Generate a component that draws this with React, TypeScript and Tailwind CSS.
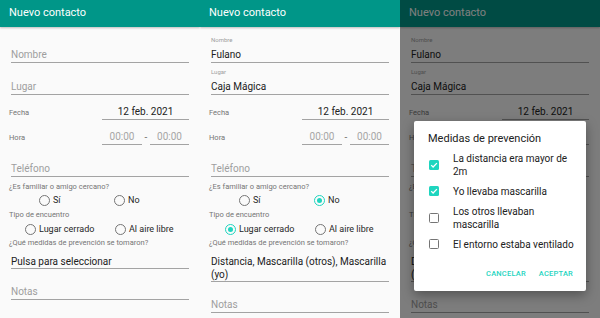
import React from "react";

function Field({ label, value, className = "" }: { label: string; value?: string; className?: string }) {
  return (
    <div className={`mx-[2px] border-b border-[#a3a3a3] ${className}`}>
      <div className="h-[10px] text-[6px] leading-[10px] text-[#9e9e9e]">{value ? label : ""}</div>
      <div className={`mt-[3px] text-[10px] leading-[14px] ${value ? "text-[#212121]" : "text-[#9e9e9e]"}`}>
        {value || label}
      </div>
    </div>
  );
}

function Radio({ label, checked }: { label: string; checked?: boolean }) {
  return (
    <div className="flex items-center gap-[3px]">
      <span
        className={`flex h-[11px] w-[11px] shrink-0 items-center justify-center rounded-full border-[1.5px] ${
          checked ? "border-[#1fd5bf]" : "border-[#757575]"
        }`}
      >
        {checked && <span className="h-[5px] w-[5px] rounded-full bg-[#1fd5bf]" />}
      </span>
      <span className="whitespace-nowrap text-[9px] leading-[12px] text-[#262626]">{label}</span>
    </div>
  );
}

function Label({ children, className = "" }: { children: React.ReactNode; className?: string }) {
  return <div className={`text-[7.5px] leading-[10px] text-[#757575] ${className}`}>{children}</div>;
}

function Checkbox({ checked }: { checked?: boolean }) {
  if (checked) {
    return (
      <span className="flex h-[10px] w-[10px] shrink-0 items-center justify-center rounded-[1.5px] bg-[#1fd5bf]">
        <svg width="10" height="10" viewBox="0 0 10 10">
          <polyline points="2.2,5.1 4.1,7 7.9,3.1" fill="none" stroke="white" strokeWidth="1.3" />
        </svg>
      </span>
    );
  }
  return <span className="h-[10px] w-[10px] shrink-0 rounded-[1.5px] border-[1.5px] border-[#757575]" />;
}

const options = [
  { text: ["La distancia era mayor de", "2m"], checked: true },
  { text: ["Yo llevaba mascarilla"], checked: true },
  { text: ["Los otros llevaban", "mascarilla"], checked: false },
  { text: ["El entorno estaba ventilado"], checked: false },
];

function Screen({ filled, dialog }: { filled?: boolean; dialog?: boolean }) {
  return (
    <div className="relative h-[318px] w-[200px] overflow-hidden bg-[#fafafa]">
      {/* Toolbar */}
      <div className="relative z-10 flex h-[27px] items-center bg-[#009688] pl-[9px] shadow-[0_1px_2px_rgba(0,0,0,0.25)]">
        <span className="text-[11px] text-white">Nuevo contacto</span>
      </div>

      <div className="px-[9px]">
        <Field label="Nombre" value={filled ? "Fulano" : undefined} className="mt-[8px]" />
        <Field label="Lugar" value={filled ? "Caja Mágica" : undefined} className="mt-[4px]" />

        {/* Fecha */}
        <div className="mt-[10px] flex items-center">
          <Label className="flex-1">Fecha</Label>
          <div className="mr-[2px] w-[87px] border-b border-[#a3a3a3] text-center text-[10px] leading-[14px] text-[#212121]">
            12 feb. 2021
          </div>
        </div>

        {/* Hora */}
        <div className="mt-[10px] flex items-center">
          <Label className="flex-1">Hora</Label>
          <div className="w-[40px] border-b border-[#a3a3a3] text-center text-[10px] leading-[14px] text-[#a6a6a6]">00:00</div>
          <div className="w-[8px] text-center text-[10px] leading-[14px] text-[#757575]">-</div>
          <div className="mr-[2px] w-[39px] border-b border-[#a3a3a3] text-center text-[10px] leading-[14px] text-[#a6a6a6]">
            00:00
          </div>
        </div>

        <Field label="Teléfono" className="mt-[4px]" />

        <Label className="mt-[5px]">¿Es familiar o amigo cercano?</Label>
        <div className="mt-[2px] flex">
          <div className="w-[91px] pl-[30px]">
            <Radio label="Sí" />
          </div>
          <div className="pl-[14px]">
            <Radio label="No" checked={filled} />
          </div>
        </div>

        <Label className="mt-[4px]">Tipo de encuentro</Label>
        <div className="mt-[3px] flex">
          <div className="w-[91px] pl-[16px]">
            <Radio label="Lugar cerrado" checked={filled} />
          </div>
          <div className="pl-[15px]">
            <Radio label="Al aire libre" />
          </div>
        </div>

        <Label className="mt-[3px]">¿Qué medidas de prevención se tomaron?</Label>
        <div className="mx-[2px] mt-[6px] border-b border-[#a3a3a3] pt-[1px] text-[10px] leading-[13px] text-[#212121]">
          {filled ? "Distancia, Mascarilla (otros), Mascarilla (yo)" : "Pulsa para seleccionar"}
        </div>

        <Field label="Notas" className="mt-[3px]" />
      </div>

      {dialog && (
        <div className="absolute inset-0 z-20 bg-black/50 pl-[14px] pt-[121px]">
          <div className="flex h-[170px] w-[172px] flex-col rounded-[2px] bg-white shadow-[0_4px_12px_rgba(0,0,0,0.35)]">
            <div className="pl-[14px] pt-[11px] text-[11px] leading-[14px] text-[#212121]">Medidas de prevención</div>
            <div className="mt-[2px]">
              {options.map((item) => (
                <div key={item.text[0]} className="flex items-center py-[3.5px] pl-[15px]">
                  <Checkbox checked={item.checked} />
                  <div className="ml-[14px] whitespace-nowrap text-[10px] leading-[13px] text-[#212121]">
                    {item.text.map((t) => (
                      <div key={t}>{t}</div>
                    ))}
                  </div>
                </div>
              ))}
            </div>
            <div className="mt-[15px] flex justify-end gap-[13px] pr-[13px]">
              <span className="text-[7.5px] font-medium leading-[10px] tracking-[0.2px] text-[#1fd5bf]">CANCELAR</span>
              <span className="text-[7.5px] font-medium leading-[10px] tracking-[0.2px] text-[#1fd5bf]">ACEPTAR</span>
            </div>
          </div>
        </div>
      )}
    </div>
  );
}

export default function App() {
  return (
    <div className="flex h-[318px] w-[600px] font-[Roboto,sans-serif]">
      <Screen />
      <Screen filled />
      <Screen filled dialog />
    </div>
  );
}
